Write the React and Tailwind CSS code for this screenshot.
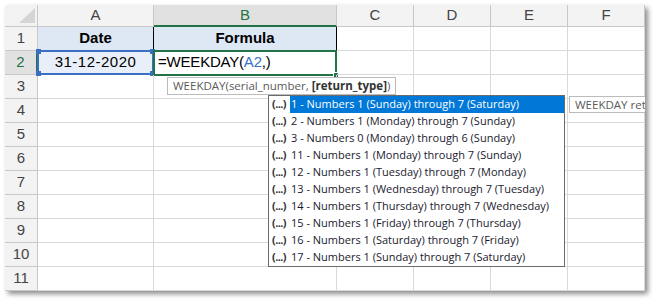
import React from "react";

const cols = ["A", "B", "C", "D", "E", "F"];

const returnTypes = [
  "1 - Numbers 1 (Sunday) through 7 (Saturday)",
  "2 - Numbers 1 (Monday) through 7 (Sunday)",
  "3 - Numbers 0 (Monday) through 6 (Sunday)",
  "11 - Numbers 1 (Monday) through 7 (Sunday)",
  "12 - Numbers 1 (Tuesday) through 7 (Monday)",
  "13 - Numbers 1 (Wednesday) through 7 (Tuesday)",
  "14 - Numbers 1 (Thursday) through 7 (Wednesday)",
  "15 - Numbers 1 (Friday) through 7 (Thursday)",
  "16 - Numbers 1 (Saturday) through 7 (Friday)",
  "17 - Numbers 1 (Sunday) through 7 (Saturday)",
];

const uiFont = "font-['Segoe_UI','Open_Sans',sans-serif]";

const Corner = () => (
  <div className="relative bg-[#f3f3f3] border-r border-b border-[#c8c8c8]">
    <svg width="33" height="22" className="absolute inset-0">
      <polygon points="14,18 30,18 30,3" fill="#d5d5d5" />
    </svg>
  </div>
);

const ColHeader = ({ label, active }) => (
  <div
    className={`flex items-center justify-center text-[15px] border-r ${
      active
        ? "bg-[#e1e1e1] text-[#217346] border-[#c8c8c8] border-b-2 border-b-[#217346]"
        : "bg-[#f3f3f3] text-[#444] border-[#c8c8c8] border-b"
    }`}
  >
    {label}
  </div>
);

const RowHeader = ({ n, active }) => (
  <div
    className={`flex items-center justify-center text-[15px] border-b ${
      active
        ? "bg-[#e1e1e1] text-[#217346] border-[#c8c8c8] border-r-2 border-r-[#217346]"
        : "bg-[#f3f3f3] text-[#444] border-[#c8c8c8] border-r"
    }`}
  >
    {n}
  </div>
);

const Cell = ({ className = "", children }) => (
  <div className={`relative flex items-center border-r border-b border-[#d9d9d9] text-[15px] text-black ${className}`}>
    {children}
  </div>
);

const Handle = ({ className }) => (
  <span className={`absolute w-[5px] h-[5px] bg-[#3b6fc4] ${className}`} />
);

export default function App() {
  return (
    <div className="w-[653px] h-[301px] bg-white pl-[5px] pt-[5px] font-['Liberation_Sans',Arial,sans-serif]">
      <div className="relative w-[640px] h-[286px] overflow-hidden bg-white shadow-[3px_3px_5px_rgba(0,0,0,0.45)]">
        <div className="grid grid-cols-[33px_116px_183px_77px_77px_77px_77px] grid-rows-[22px_repeat(11,24px)]">
          <Corner />
          {cols.map((c) => (
            <ColHeader key={c} label={c} active={c === "B"} />
          ))}

          {/* row 1 */}
          <RowHeader n={1} />
          <Cell className="justify-center bg-[#dde8f4] font-bold border-r-black">Date</Cell>
          <Cell className="justify-center bg-[#dde8f4] font-bold border-r-black">Formula</Cell>
          <Cell />
          <Cell />
          <Cell />
          <Cell />

          {/* row 2 */}
          <RowHeader n={2} active />
          <Cell className="justify-center bg-[#e9eff8] tracking-[0.5px]">
            31-12-2020
            <div className="absolute -left-[1px] -top-[1px] w-[117px] h-[25px] border-2 border-[#3b6fc4]">
              <Handle className="-left-[3px] -top-[3px]" />
              <Handle className="-right-[3px] -top-[3px]" />
              <Handle className="-left-[3px] -bottom-[3px]" />
              <Handle className="-right-[3px] -bottom-[3px]" />
            </div>
          </Cell>
          <Cell className="pl-[4px] tracking-[-0.2px]">
            <span>
              =WEEKDAY(<span className="text-[#3b6fc4]">A2</span>,)
            </span>
            <div className="absolute -left-[1px] -top-[1px] w-[184px] h-[26px] border-2 border-[#217346]">
              <span className="absolute -right-[4px] -bottom-[4px] w-[6px] h-[6px] bg-[#217346] border border-white" />
            </div>
          </Cell>
          <Cell />
          <Cell />
          <Cell />
          <Cell />

          {Array.from({ length: 9 }, (_, i) => i + 3).map((n) => (
            <React.Fragment key={n}>
              <RowHeader n={n} />
              {cols.map((c) => (
                <Cell key={c} />
              ))}
            </React.Fragment>
          ))}
        </div>

        {/* argument tooltip */}
        <div
          className={`absolute left-[162px] top-[72px] h-[18px] flex items-center px-[5px] border border-[#bcbcbc] bg-white text-[11.5px] text-[#5a5a5a] whitespace-nowrap ${uiFont}`}
        >
          WEEKDAY(serial_number, <span className="ml-[3px] font-bold text-[#333]">[return_type]</span>)
        </div>

        {/* return_type list */}
        <div className={`absolute left-[263px] top-[90px] w-[297px] border border-[#6b6b6b] bg-white ${uiFont}`}>
          {returnTypes.map((t, i) => (
            <div key={t} className="flex h-[17px] items-center text-[11px]">
              <span className="w-[21px] shrink-0 pl-[3px] font-bold text-[11px] tracking-[-0.6px] text-[#333]">
                (...)
              </span>
              <span
                className={`flex h-full flex-1 items-center pl-[1px] whitespace-nowrap ${
                  i === 0 ? "bg-[#0078d7] text-white" : "text-[#1a1a2e]"
                }`}
              >
                {t}
              </span>
            </div>
          ))}
        </div>

        {/* description tooltip, runs past the window edge */}
        <div
          className={`absolute left-[564px] top-[91px] w-[120px] h-[17px] flex items-center px-[5px] border border-[#bcbcbc] bg-white text-[11.5px] text-[#5a5a5a] whitespace-nowrap ${uiFont}`}
        >
          WEEKDAY ret
        </div>
      </div>
    </div>
  );
}
